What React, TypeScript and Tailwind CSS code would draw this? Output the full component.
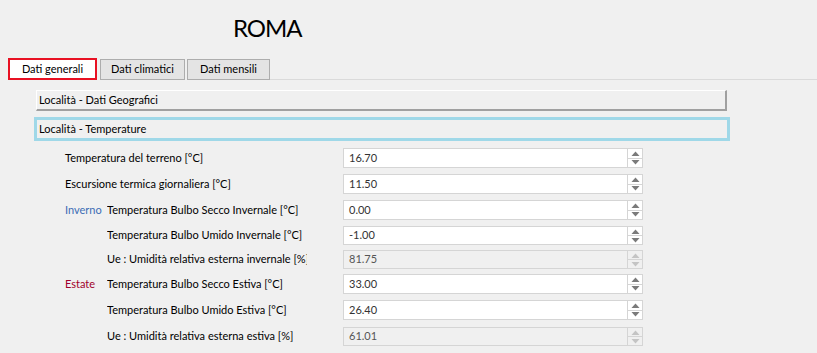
import React from 'react';

interface Row {
  tag?: string;
  tagColor?: string;
  label: string;
  indent: boolean;
  value: string;
  disabled?: boolean;
  mt: string;
  h: string;
}

const rows: Row[] = [
  { label: 'Temperatura del terreno [°C]', indent: false, value: '16.70', mt: 'mt-[7px]', h: 'h-[20px]' },
  { label: 'Escursione termica giornaliera [°C]', indent: false, value: '11.50', mt: 'mt-[6px]', h: 'h-[20px]' },
  { tag: 'Inverno', tagColor: 'text-[#3d6db5]', label: 'Temperatura Bulbo Secco Invernale [°C]', indent: true, value: '0.00', mt: 'mt-[6px]', h: 'h-[20px]' },
  { label: 'Temperatura Bulbo Umido Invernale [°C]', indent: true, value: '-1.00', mt: 'mt-[6px]', h: 'h-[19px]' },
  { label: 'Ue : Umidità relativa esterna invernale [%]', indent: true, value: '81.75', disabled: true, mt: 'mt-[5px]', h: 'h-[19px]' },
  { tag: 'Estate', tagColor: 'text-[#a1002c]', label: 'Temperatura Bulbo Secco Estiva [°C]', indent: true, value: '33.00', mt: 'mt-[5px]', h: 'h-[20px]' },
  { label: 'Temperatura Bulbo Umido Estiva [°C]', indent: true, value: '26.40', mt: 'mt-[6px]', h: 'h-[20px]' },
  { label: 'Ue : Umidità relativa esterna estiva [%]', indent: true, value: '61.01', disabled: true, mt: 'mt-[7px]', h: 'h-[19px]' },
];

const Arrow = ({ up, disabled }: { up: boolean; disabled?: boolean }) => (
  <svg width="9" height="5" viewBox="0 0 9 5">
    {up ? (
      <path d="M0.5 5 L4.5 0.5 L8.5 5 Z" fill={disabled ? '#c4c4c4' : '#7a7a7a'} />
    ) : (
      <path d="M0.5 0 L4.5 4.5 L8.5 0 Z" fill={disabled ? '#c4c4c4' : '#7a7a7a'} />
    )}
  </svg>
);

const SpinBox = ({ value, disabled, h }: { value: string; disabled?: boolean; h: string }) => (
  <div className={`flex w-[300px] ${h}`}>
    <div
      className={`flex-1 flex items-center pl-[5px] border border-[#d5d5d5] ${
        disabled ? 'bg-[#f0f0f0] text-[#555]' : 'bg-white text-[#333]'
      }`}
    >
      {value}
    </div>
    <div className="w-[15px] flex flex-col">
      <div
        className={`flex-1 flex items-center justify-center border border-l-0 border-[#d5d5d5] ${
          disabled ? 'bg-[#f0f0f0]' : 'bg-white'
        }`}
      >
        <Arrow up disabled={disabled} />
      </div>
      <div
        className={`flex-1 flex items-center justify-center border border-l-0 border-t-0 border-[#d5d5d5] ${
          disabled ? 'bg-[#f0f0f0]' : 'bg-white'
        }`}
      >
        <Arrow up={false} disabled={disabled} />
      </div>
    </div>
  </div>
);

export default function App() {
  return (
    <div
      className="w-[817px] h-[353px] overflow-hidden bg-[#f0f0f0] text-[11px] text-black"
      style={{ fontFamily: 'Lato, "Open Sans", sans-serif' }}
    >
      {/* Title */}
      <div className="h-[58px] pl-[233px] pt-[13px]">
        <span className="text-[24px] leading-[30px] tracking-[-1px]">ROMA</span>
      </div>

      {/* Tabs */}
      <div className="flex items-end h-[22px] pl-[8px]">
        <div className="w-[89px] h-[22px] border-2 border-[#e81123] bg-white flex items-center justify-center">
          Dati generali
        </div>
        <div className="ml-[3px] w-[85px] h-[21px] border border-[#adadad] bg-[#e4e4e4] flex items-center justify-center">
          Dati climatici
        </div>
        <div className="ml-[2px] w-[83px] h-[21px] border border-[#adadad] bg-[#e4e4e4] flex items-center justify-center">
          Dati mensili
        </div>
        <div className="flex-1 h-px bg-[#dadada]" />
      </div>

      {/* Section headers */}
      <div className="mt-[10px] ml-[36px] w-[691px] h-[21px] border-t border-l border-t-white border-l-white border-r-2 border-b-2 border-r-[#a0a0a0] border-b-[#a0a0a0] flex items-center pl-[2px]">
        Località - Dati Geografici
      </div>
      <div className="mt-[6px] ml-[34px] w-[696px] h-[24px] border-[3px] border-[#9fd8e8] flex items-center pl-[2px]">
        Località - Temperature
      </div>

      {/* Rows */}
      <div className="flex flex-col">
        {rows.map((r, i) => (
          <div key={i} className={`flex items-center ${r.mt}`}>
            <div className="w-[343px] pl-[65px] flex items-center whitespace-nowrap">
              {r.indent ? (
                <>
                  <span className={`w-[42px] shrink-0 ${r.tagColor ?? ''}`}>{r.tag ?? ''}</span>
                  <span className="w-[200px] overflow-hidden">{r.label}</span>
                </>
              ) : (
                <span>{r.label}</span>
              )}
            </div>
            <SpinBox value={r.value} disabled={r.disabled} h={r.h} />
          </div>
        ))}
      </div>
    </div>
  );
}
